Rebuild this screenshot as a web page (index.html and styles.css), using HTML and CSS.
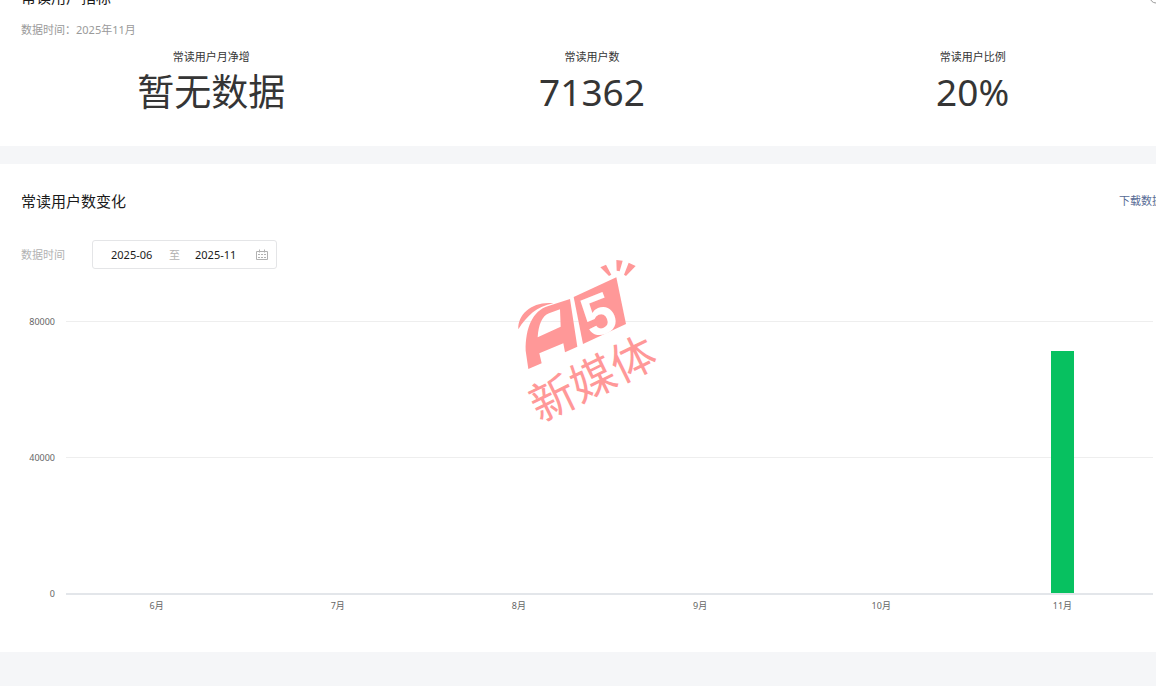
FILE: index.html
```
<!DOCTYPE html>
<html lang="zh-CN">
<head>
<meta charset="utf-8">
<meta name="viewport" content="width=device-width, initial-scale=1">
<title>常读用户</title>
<link rel="stylesheet" href="styles.css">
</head>
<body>
<main class="page">
  <section class="panel summary">
    <header class="panel-head">
      <h2 class="title">常读用户指标</h2>
      <svg class="help" viewBox="0 0 14 14" aria-hidden="true"><circle cx="7" cy="7" r="6" fill="none" stroke="currentColor"/></svg>
    </header>
    <p class="period">数据时间：2025年11月</p>
    <dl class="metrics">
      <div class="metric"><dt>常读用户月净增</dt><dd>暂无数据</dd></div>
      <div class="metric"><dt>常读用户数</dt><dd>71362</dd></div>
      <div class="metric"><dt>常读用户比例</dt><dd>20%</dd></div>
    </dl>
  </section>

  <section class="panel trend">
    <header class="panel-head">
      <h2 class="title">常读用户数变化</h2>
      <a class="download" href="#">下载数据</a>
    </header>
    <div class="filter">
      <label class="filter-label" for="from">数据时间</label>
      <div class="range">
        <input class="month" id="from" type="text" value="2025-06">
        <span class="to">至</span>
        <input class="month" type="text" value="2025-11" aria-label="结束月份">
        <svg class="calendar" viewBox="0 0 12 12" fill="none" stroke="currentColor" aria-hidden="true">
          <path d="M.5 2.500h11v8H.5zM3.500.5v3M8.500.5v3"/>
          <path d="M2 5.500h8M2 8.500h8" stroke-dasharray="2 1"/>
        </svg>
      </div>
    </div>
    <div class="chart">
      <div class="y-axis"><span>80000</span><span>40000</span><span>0</span></div>
      <div class="plot">
        <div class="col"></div><div class="col"></div><div class="col"></div>
        <div class="col"></div><div class="col"></div>
        <div class="col"><div class="bar" style="height:89.2%"></div></div>
      </div>
      <div class="x-axis"><span>6月</span><span>7月</span><span>8月</span><span>9月</span><span>10月</span><span>11月</span></div>
    </div>
  </section>

  <svg class="watermark" viewBox="0 0 510 540" role="img" aria-label="A5新媒体">
    <path d="M40 238C38 190 85 153 145 160C95 170 66 197 40 238Z"/>
    <path fill-rule="evenodd" d="M70 357L62 302C61 235 82 182 130 168L195 147L217 290L180 307L175 280L103 310L110 340ZM98 262C101 224 111 198 132 190L165 178L167 230Z"/>
    <path d="M206 141L334 82L363 222L234 282Z"/>
    <path d="M286 52L303 44L319 74L312 78ZM334 30L353 32L344 64L335 62ZM371 38L392 48L363 78L357 74Z"/>
    <text class="mark-digit" transform="translate(259 267) rotate(-22)">5</text>
    <text class="mark-name" transform="translate(104 518) rotate(-26)">新媒体</text>
  </svg>
</main>
</body>
</html>
```
FILE: styles.css
```
* { box-sizing: border-box; }

body {
  margin: 0;
  background: #f5f6f8;
  color: #353535;
  font-family: "Noto Sans", "Noto Sans CJK SC", sans-serif;
  font-size: 11px;
  line-height: 16px;
}

.page {
  position: relative;
  overflow: hidden;
}

.panel {
  margin-right: -7px;
  padding-left: 21px;
  background: #fff;
}

.summary {
  margin-top: -14px;
  padding-bottom: 28px;
}

.panel-head {
  display: flex;
  justify-content: space-between;
  align-items: center;
}

.title {
  margin: 0;
  color: #1a1a1a;
  font-size: 15px;
  font-weight: 400;
  line-height: 22px;
}

.help {
  width: 14px;
  height: 14px;
  color: #9a9a9a;
}

.period {
  margin: 14px 0 11px;
  color: #9a9a9a;
}

.metrics {
  display: grid;
  grid-template-columns: repeat(3, 1fr);
  margin: 0;
  text-align: center;
}

.metric dd {
  margin: 0;
  font-size: 37px;
  line-height: 53px;
}

.trend {
  margin-top: 18px;
  padding-top: 26px;
  padding-bottom: 40px;
}

.download {
  color: #576b95;
  text-decoration: none;
}

.filter {
  display: flex;
  align-items: center;
  gap: 27px;
  margin-top: 28px;
}

.filter-label { color: #b2b2b2; }

.range {
  display: flex;
  align-items: center;
  height: 29px;
  padding: 0 8px 0 18px;
  border: 1px solid #e4e5e7;
  border-radius: 3px;
}

.month {
  width: 44px;
  padding: 0;
  border: 0;
  outline: 0;
  background: none;
  color: #1a1a1a;
  font: inherit;
}

.to {
  margin: 0 15px 0 14px;
  color: #b2b2b2;
}

.calendar {
  width: 12px;
  height: 12px;
  margin-left: 17px;
  color: #b2b2b2;
}

.chart {
  display: grid;
  grid-template-columns: 34px 1fr;
  column-gap: 11px;
  margin: 52px 10px 0 0;
  color: #666;
  font-size: 9px;
  line-height: 12px;
}

.y-axis {
  display: flex;
  flex-direction: column;
  justify-content: space-between;
  margin: -5px 0;
  text-align: right;
}

.plot {
  display: grid;
  grid-template-columns: repeat(6, 1fr);
  height: 274px;
  border-top: 1px solid #eee;
  border-bottom: 2px solid #e3e6ea;
  background: linear-gradient(#eee, #eee) center / 100% 1px no-repeat;
}

.col {
  display: flex;
  justify-content: center;
  align-items: flex-end;
}

.bar {
  width: 23px;
  background: #07c160;
}

.x-axis {
  display: grid;
  grid-column: 2;
  grid-template-columns: repeat(6, 1fr);
  margin-top: 5px;
  text-align: center;
}

.watermark {
  position: absolute;
  top: 250px;
  left: 505px;
  width: 170px;
  height: 180px;
  overflow: visible;
  fill: #ff9898;
  pointer-events: none;
}

.mark-digit {
  fill: #fff;
  font: 700 172px "Liberation Sans", sans-serif;
}

.mark-name { font: 400 134px "Noto Sans CJK SC", sans-serif; }
```
